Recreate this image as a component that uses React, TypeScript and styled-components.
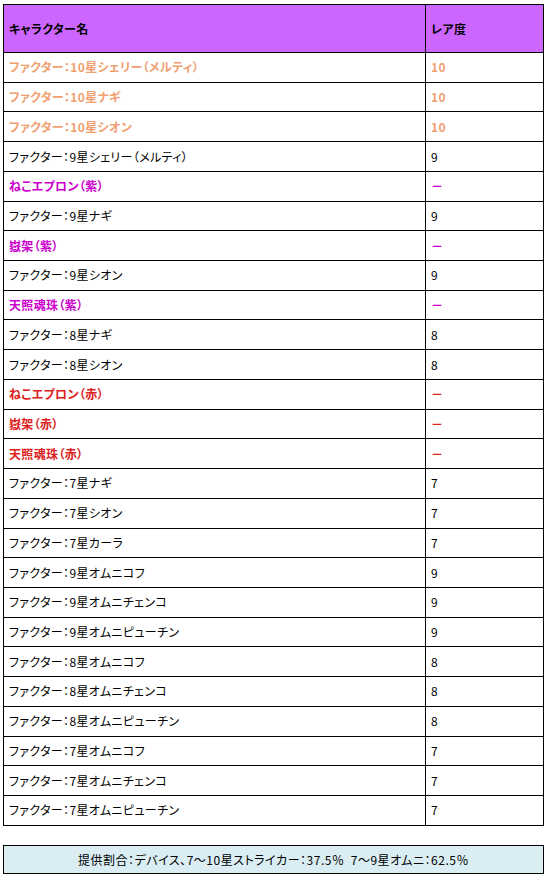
import React from 'react'
import styled, { createGlobalStyle } from 'styled-components'

const GlobalStyle = createGlobalStyle`
    html, body {
        margin: 0;
        padding: 0;
        background: #ffffff;
    }
    body {
        font-family: "Noto Sans CJK JP", "Noto Sans", sans-serif;
        font-size: 12px;
        color: #000000;
        font-feature-settings: "palt";
        letter-spacing: 0.35px;
    }
`

const Page = styled.div`
    width: 548px;
    padding: 4px 4px 0 3px;
    box-sizing: border-box;
`

const RareTable = styled.table`
    width: 541px;
    border-collapse: collapse;
    table-layout: fixed;
    border: 1px solid #000;
`

const HeadCell = styled.th`
    height: 47px;
    background: #cc66ff;
    border: 1px solid #000;
    text-align: left;
    padding: 0 5px;
    font-weight: bold;
    font-size: 12px;
    line-height: 1;
`

const Row = styled.tr`
    height: 29.73px;
`

const Cell = styled.td<{ tone: string }>`
    border: 1px solid #000;
    padding: 0 5px;
    line-height: 1;
    font-size: 12px;
    white-space: nowrap;
    color: ${(props) => props.tone};
    font-weight: ${(props) => (props.tone === '#000000' ? 'normal' : 'bold')};
`

const Summary = styled.div`
    margin-top: 19px;
    width: 541px;
    height: 29px;
    box-sizing: border-box;
    border: 1px solid #000;
    background: #daedf3;
    display: flex;
    align-items: center;
    justify-content: center;
    font-size: 12px;
    white-space: pre;
    letter-spacing: 0.5px;
`

const ORANGE = '#f0a070'
const PURPLE = '#cc00cc'
const RED = '#dd2020'
const BLACK = '#000000'

const rows: [string, string, string][] = [
    ['ファクター：10星シェリー（メルティ）', '10', ORANGE],
    ['ファクター：10星ナギ', '10', ORANGE],
    ['ファクター：10星シオン', '10', ORANGE],
    ['ファクター：9星シェリー（メルティ）', '9', BLACK],
    ['ねこエプロン（紫）', '－', PURPLE],
    ['ファクター：9星ナギ', '9', BLACK],
    ['嶽架（紫）', '－', PURPLE],
    ['ファクター：9星シオン', '9', BLACK],
    ['天照魂珠（紫）', '－', PURPLE],
    ['ファクター：8星ナギ', '8', BLACK],
    ['ファクター：8星シオン', '8', BLACK],
    ['ねこエプロン（赤）', '－', RED],
    ['嶽架（赤）', '－', RED],
    ['天照魂珠（赤）', '－', RED],
    ['ファクター：7星ナギ', '7', BLACK],
    ['ファクター：7星シオン', '7', BLACK],
    ['ファクター：7星カーラ', '7', BLACK],
    ['ファクター：9星オムニコフ', '9', BLACK],
    ['ファクター：9星オムニチェンコ', '9', BLACK],
    ['ファクター：9星オムニピューチン', '9', BLACK],
    ['ファクター：8星オムニコフ', '8', BLACK],
    ['ファクター：8星オムニチェンコ', '8', BLACK],
    ['ファクター：8星オムニピューチン', '8', BLACK],
    ['ファクター：7星オムニコフ', '7', BLACK],
    ['ファクター：7星オムニチェンコ', '7', BLACK],
    ['ファクター：7星オムニピューチン', '7', BLACK],
]

function App() {
    return (
        <Page>
            <GlobalStyle />
            <RareTable>
                <colgroup>
                    <col style={{ width: 422 }} />
                    <col />
                </colgroup>
                <thead>
                    <tr>
                        <HeadCell>キャラクター名</HeadCell>
                        <HeadCell>レア度</HeadCell>
                    </tr>
                </thead>
                <tbody>
                    {rows.map(([name, rare, tone]) => (
                        <Row key={name}>
                            <Cell tone={tone}>{name}</Cell>
                            <Cell tone={tone}>{rare}</Cell>
                        </Row>
                    ))}
                </tbody>
            </RareTable>
            <Summary>提供割合：デバイス、7～10星ストライカー：37.5％  7～9星オムニ：62.5％</Summary>
        </Page>
    )
}

export default App
